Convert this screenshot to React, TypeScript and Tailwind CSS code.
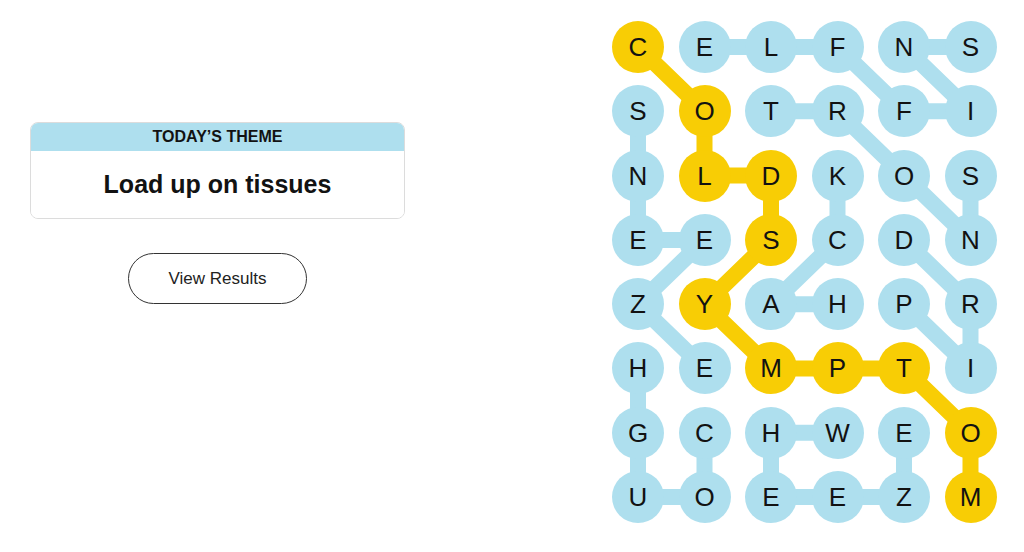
const ROWS = [
  "CELFNS",
  "SOTRFI",
  "NLDKOS",
  "EESCDN",
  "ZYAHPR",
  "HEMPTI",
  "GCHWEO",
  "UOEEZM",
];

const D = 52;
const DX = 66.5;
const DY = 64.3;

type Cell = [number, number];

const words: Cell[][] = [
  // sniffle
  [[0, 5], [0, 4], [1, 5], [1, 4], [0, 3], [0, 2], [0, 1]],
  // sneeze
  [[1, 0], [2, 0], [3, 0], [3, 1], [4, 0], [5, 1]],
  // hack
  [[4, 3], [4, 2], [3, 3], [2, 3]],
  // snort
  [[2, 5], [3, 5], [2, 4], [1, 3], [1, 2]],
  // drip
  [[3, 4], [4, 5], [5, 5], [4, 4]],
  // cough
  [[6, 1], [7, 1], [7, 0], [6, 0], [5, 0]],
  // wheeze
  [[6, 3], [6, 2], [7, 2], [7, 3], [7, 4], [6, 4]],
];

const spangram: Cell[] = [
  [0, 0], [1, 1], [2, 1], [2, 2], [3, 2], [4, 1], [5, 2], [5, 3], [5, 4], [6, 5], [7, 5],
];

const isSpangram = (r: number, c: number) =>
  spangram.some(([a, b]) => a === r && b === c);

const toPoints = (path: Cell[]) =>
  path.map(([r, c]) => `${D / 2 + c * DX},${D / 2 + r * DY}`).join(" ");

const Board = () => {
  const w = D + 5 * DX;
  const h = D + 7 * DY;

  return (
    <div className="relative w-[384.5px] h-[502px]">
      <svg className="absolute inset-0" width={w} height={h} viewBox={`0 0 ${w} ${h}`}>
        {words.map((p, i) => (
          <polyline
            key={i}
            points={toPoints(p)}
            fill="none"
            stroke="#aedfee"
            strokeWidth={16}
            strokeLinejoin="round"
            strokeLinecap="round"
          />
        ))}
        <polyline
          points={toPoints(spangram)}
          fill="none"
          stroke="#f8cd05"
          strokeWidth={16}
          strokeLinejoin="round"
          strokeLinecap="round"
        />
      </svg>
      <div className="relative grid grid-cols-[repeat(6,52px)] gap-x-[14.5px] gap-y-[12.3px]">
        {ROWS.map((row, r) =>
          row.split("").map((ch, c) => (
            <div
              key={`${r}-${c}`}
              className={`w-[52px] h-[52px] rounded-full flex items-center justify-center text-[26px] text-[#121212] leading-none ${
                isSpangram(r, c) ? "bg-[#f8cd05]" : "bg-[#aedfee]"
              }`}
            >
              {ch}
            </div>
          ))
        )}
      </div>
    </div>
  );
};

export default function App() {
  return (
    <div className="w-full h-[552px] bg-white flex font-['Liberation_Sans',Arial,sans-serif] text-[#121212]">
      <div className="w-[435px] flex flex-col items-center pt-[122px]">
        <div className="w-[375px] rounded-[8px] border border-[#dcdcdc] overflow-hidden">
          <div className="h-[28px] bg-[#aedfee] flex items-center justify-center text-[16px] font-bold uppercase">
            Today’s Theme
          </div>
          <div className="h-[67px] bg-white flex items-center justify-center text-[25px] font-bold">
            Load up on tissues
          </div>
        </div>
        <button className="mt-[34px] w-[179px] h-[51px] rounded-full border border-[#333] bg-white text-[17px] text-[#222]">
          View Results
        </button>
      </div>
      <div className="ml-[177px] mt-[21px]">
        <Board />
      </div>
    </div>
  );
}
